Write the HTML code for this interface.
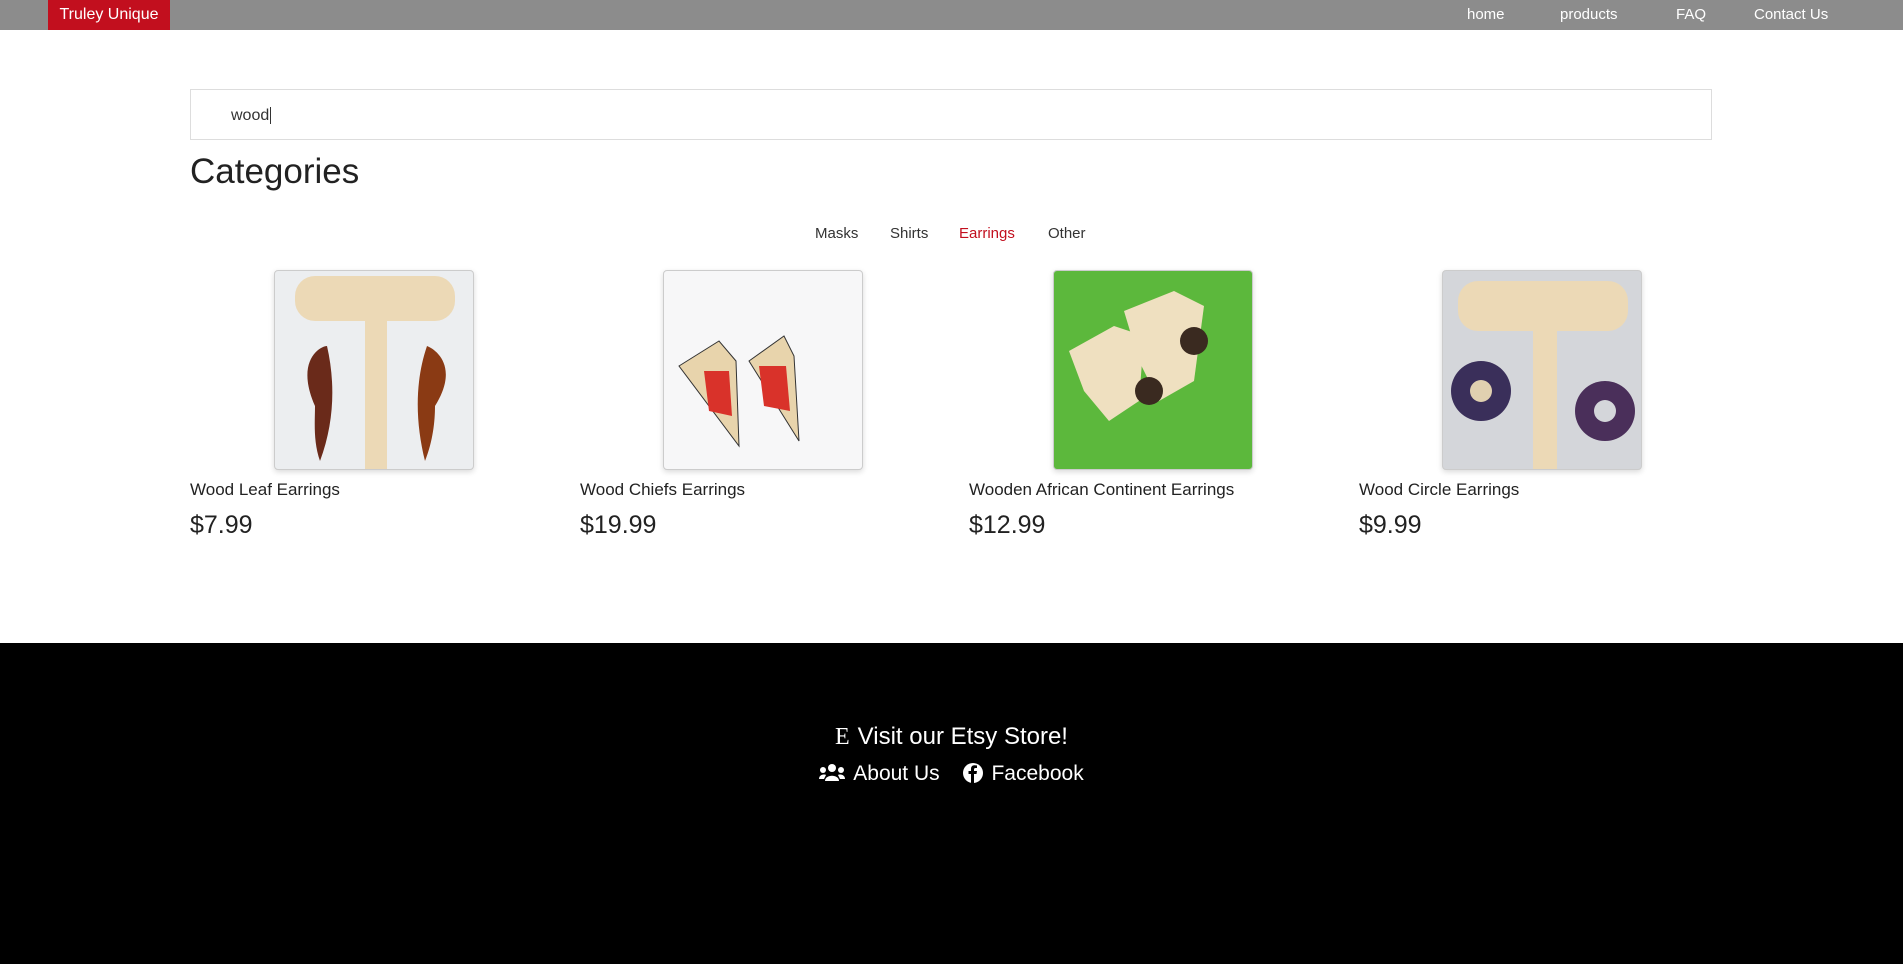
<!DOCTYPE html>
<html><head><meta charset="utf-8"><style>
*{margin:0;padding:0;box-sizing:border-box}
body{width:1903px;height:964px;overflow:hidden;font-family:"Liberation Sans",sans-serif;background:#fff;color:#222;position:relative}
.nav{position:absolute;left:0;top:0;width:1903px;height:30px;background:#8c8c8c}
.brand{position:absolute;left:48px;top:0;width:122px;height:30px;background:#c20f1e;color:#fff;font-size:16px;line-height:30px;text-align:center}
.nl{position:absolute;top:0;line-height:30px;color:#fff;font-size:15px}
.search{position:absolute;left:190px;top:89px;width:1522px;height:51px;border:1px solid #ddd;font-size:16px;padding-left:40px;line-height:51px;color:#333}
h1{position:absolute;left:190px;top:152px;font-weight:normal;font-size:35px;color:#222}
.cat{position:absolute;top:225px;font-size:15px;color:#333}
.img{position:absolute;top:270px;width:200px;height:200px;border:1px solid #ccc;border-radius:4px;overflow:hidden;box-shadow:0 2px 6px rgba(0,0,0,.15)}
.t{position:absolute;top:480px;font-size:17px;color:#222}
.p{position:absolute;top:511px;font-size:25px;color:#222}
.foot{position:absolute;left:0;top:643px;width:1903px;height:321px;background:#000;color:#fff}
</style></head><body>
<div class="nav"><div class="brand">Truley Unique</div>
<span class="nl" style="left:1467px">home</span><span class="nl" style="left:1560px">products</span><span class="nl" style="left:1676px">FAQ</span><span class="nl" style="left:1754px">Contact Us</span></div>
<div class="search">wood<span style="border-left:1px solid #333;margin-left:1px"></span></div>
<h1>Categories</h1>
<span class="cat" style="left:815px">Masks</span><span class="cat" style="left:890px">Shirts</span><span class="cat" style="left:959px;color:#c20f1e">Earrings</span><span class="cat" style="left:1048px">Other</span>

<div class="img" style="left:274px;background:#eceef0"><svg width="200" height="200"><rect x="20" y="5" width="160" height="45" rx="20" fill="#ecd9b6"/><rect x="90" y="40" width="22" height="160" fill="#ecd9b6"/><path d="M40 135 C20 90 45 75 52 75 C60 110 60 150 45 190 C38 170 40 150 40 135Z" fill="#6a2a1a"/><path d="M160 135 C185 95 160 78 152 75 C140 110 140 150 150 190 C158 170 160 150 160 135Z" fill="#8a3a14"/></svg></div>
<div class="img" style="left:663px;background:#f7f7f8"><svg width="200" height="200"><path d="M15 95 L55 70 L72 90 L75 175 Z" fill="#e8d4ac" stroke="#333"/><path d="M85 90 L120 65 L130 85 L135 170 Z" fill="#e8d4ac" stroke="#333"/><path d="M40 100 L65 100 L68 145 L45 140Z" fill="#d9322a"/><path d="M95 95 L122 95 L126 140 L100 135Z" fill="#d9322a"/></svg></div>
<div class="img" style="left:1053px;background:#5cb83c"><svg width="200" height="200"><path d="M15 80 L60 55 L90 65 L85 130 L55 150 L30 120Z" fill="#efe0c0"/><path d="M70 40 L120 20 L150 35 L140 110 L105 130 L85 90Z" fill="#efe0c0"/><circle cx="95" cy="120" r="14" fill="#3a2a20"/><circle cx="140" cy="70" r="14" fill="#3a2a20"/></svg></div>
<div class="img" style="left:1442px;background:#d4d6da"><svg width="200" height="200"><rect x="15" y="10" width="170" height="50" rx="20" fill="#ecd9b6"/><rect x="90" y="45" width="24" height="155" fill="#ecd9b6"/><circle cx="38" cy="120" r="30" fill="#3a2f5a"/><circle cx="38" cy="120" r="11" fill="#e0d0b0"/><circle cx="162" cy="140" r="30" fill="#4a2f5a"/><circle cx="162" cy="140" r="11" fill="#d4d6da"/></svg></div>

<span class="t" style="left:190px">Wood Leaf Earrings</span><span class="p" style="left:190px">$7.99</span>
<span class="t" style="left:580px">Wood Chiefs Earrings</span><span class="p" style="left:580px">$19.99</span>
<span class="t" style="left:969px">Wooden African Continent Earrings</span><span class="p" style="left:969px">$12.99</span>
<span class="t" style="left:1359px">Wood Circle Earrings</span><span class="p" style="left:1359px">$9.99</span>

<div class="foot">
<div style="position:absolute;left:0;width:1903px;top:80px;text-align:center;font-size:24px"><span style="font-family:'Liberation Serif',serif;margin-right:8px">E</span>Visit our Etsy Store!</div>
<div style="position:absolute;left:0;width:1903px;top:119px;text-align:center;font-size:21px">
<svg width="26" height="18" viewBox="0 0 26 18" style="vertical-align:-2px;margin-right:8px" fill="#fff"><circle cx="13" cy="4" r="4"/><circle cx="4" cy="6" r="3"/><circle cx="22" cy="6" r="3"/><path d="M6 17 C6 10 20 10 20 17Z"/><path d="M0 15 C0 10 6 10 7 11 L5 15Z"/><path d="M26 15 C26 10 20 10 19 11 L21 15Z"/></svg>About Us
<svg width="20" height="20" viewBox="0 0 20 20" style="vertical-align:-3px;margin:0 8px 0 18px"><circle cx="10" cy="10" r="10" fill="#fff"/><path d="M11 20 V11 H13.5 L14 8 H11 V6.5 C11 5.5 11.5 5 12.5 5 H14 V2.5 C13 2.3 12 2.2 11.5 2.2 C9 2.2 8 3.8 8 6 V8 H5.5 V11 H8 V20Z" fill="#000"/></svg>Facebook</div>
</div>
</body></html>
